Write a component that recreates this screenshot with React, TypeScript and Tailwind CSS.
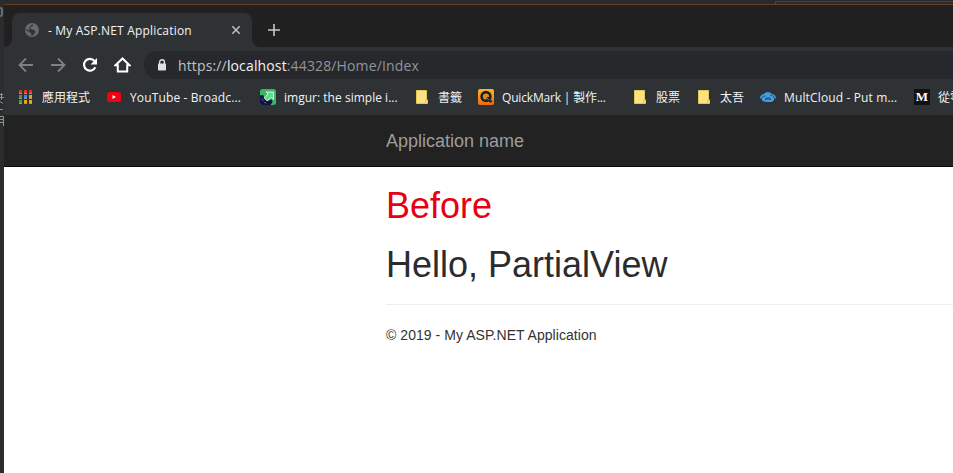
import React from 'react';

const uiFont = "font-['Open_Sans','Noto_Sans_CJK_TC',sans-serif]";

function Folder() {
  return (
    <svg width="16" height="16" viewBox="0 0 16 16">
      <path d="M2.500 1.500h10v9.500h1v3.500h-11z" fill="#fbe289" stroke="#e9c64d" />
      <path d="M11.500 14v-3h2" fill="none" stroke="#e9c64d" />
    </svg>
  );
}

function AppsIcon() {
  const rows = [
    ['#e3342c', '#e3342c', '#e3342c'],
    ['#459a50', '#4285f4', '#eda60c'],
    ['#459a50', '#eda60c', '#eda60c'],
  ];
  return (
    <svg width="16" height="16" viewBox="0 0 16 16" shapeRendering="crispEdges">
      {rows.map((row, r) =>
        row.map((color, c) => (
          <g key={`${r}-${c}`}>
            <rect x={1 + c * 5} y={1 + r * 5} width="3" height="3" fill={color} />
            <rect x={1 + c * 5} y={4 + r * 5} width="3" height="1" fill="#9a9c9b" />
          </g>
        )),
      )}
    </svg>
  );
}

function YouTubeIcon() {
  return (
    <svg width="16" height="16" viewBox="0 0 16 16">
      <rect x="1" y="3" width="14" height="10" rx="2.500" fill="#f00011" />
      <path d="M6.500 6v4l3.500-2z" fill="#fff" />
    </svg>
  );
}

function ImgurIcon() {
  return (
    <svg width="16" height="16" viewBox="0 0 16 16">
      <rect width="16" height="16" rx="2.500" fill="#3fb364" />
      <path d="M0 6.500l3-.5 2 3 1 2 3 .5 3-1 .5 2.500-2 3H2.500A2.500 2.500 0 0 1 0 13.500z" fill="#15123f" />
      <path d="M6 3h7.500v7.500L11 8.300 7.300 12 4 8.700 8 5.200z" fill="#5fd98b" stroke="#d9f5df" strokeLinejoin="round" />
      <path d="M1.500 9.500l2 2.500M4 13.500l2.500.5" stroke="#7371a0" strokeWidth=".8" />
    </svg>
  );
}

function QuickMarkIcon() {
  return (
    <svg width="16" height="16" viewBox="0 0 16 16">
      <defs>
        <linearGradient id="qm" x1="0" y1="0" x2="0" y2="1">
          <stop stopColor="#fbb72a" />
          <stop offset="1" stopColor="#f0690d" />
        </linearGradient>
      </defs>
      <rect width="16" height="16" rx="2" fill="url(#qm)" />
      <circle cx="8" cy="7.500" r="4.400" fill="#e58c1d" stroke="#1d211e" strokeWidth="2.600" />
      <path d="M9 8.500l4.500 4.500" stroke="#1d211e" strokeWidth="2.800" />
      <path d="M8.500 8.500l2 2M12 10.500l1 1" stroke="#a8a184" strokeWidth="1" />
    </svg>
  );
}

function CloudIcon() {
  return (
    <svg width="16" height="16" viewBox="0 0 16 16">
      <path d="M4 5C5 2.500 10.500 2.500 12 5c2.500.3 4 2.200 4 4.500h-2c.5 3-2 3.500-6 3.500s-6.500-.5-6-3.500H0C0 7 1.500 5.300 4 5z" fill="#449fe0" />
      <path d="M1.500 9.500C2.500 7.500 4 7 5.500 7M14.500 9.500C13.500 7 12 5.800 10 6" fill="none" stroke="#24496a" strokeWidth="1" />
      <path d="M5 10.200c.8-1.800 5.200-1.800 6 0z" fill="#2f7fbd" stroke="#1e4c73" strokeWidth=".9" />
    </svg>
  );
}

function MediumIcon() {
  return (
    <span className="flex h-4 w-4 items-center justify-center bg-[#111] font-['Liberation_Serif',serif] text-[13px] leading-4 font-bold text-white">
      M
    </span>
  );
}

const bookmarks = [
  { label: '應用程式', icon: <AppsIcon />, width: 'w-[88px]', text: '' },
  { label: 'YouTube - Broadc...', icon: <YouTubeIcon />, width: 'w-[154px]', text: 'tracking-[0.13px]' },
  { label: 'imgur: the simple i...', icon: <ImgurIcon />, width: 'w-[154px]', text: 'tracking-[0.02px]' },
  { label: '書籤', icon: <Folder />, width: 'w-16', text: '' },
  { label: 'QuickMark | 製作...', icon: <QuickMarkIcon />, width: 'w-[154px]', text: 'tracking-[-0.17px]' },
  { label: '股票', icon: <Folder />, width: 'w-16', text: '' },
  { label: '太吾', icon: <Folder />, width: 'w-16', text: '' },
  { label: 'MultCloud - Put m...', icon: <CloudIcon />, width: 'w-[154px]', text: 'tracking-[0.14px]' },
  { label: '從零', icon: <MediumIcon />, width: 'w-[88px]', text: '' },
];

function TabStrip() {
  return (
    <div className="flex h-[42px] items-end bg-[#202021] pl-2">
      <div className="relative flex h-[34px] w-[240px] items-center rounded-t-lg bg-[#2e3234]">
        <svg className="ml-3 shrink-0" width="16" height="16" viewBox="0 0 16 16">
          <circle cx="8" cy="8" r="7" fill="#66696b" />
          <path d="M8 2.500c2 0 1 1.500-.5 2S6 6 7 7s3 .5 4 2-1 3-2.500 4.500L7 14l.5-2.500C6 10.500 4 9 2 8.500L1.800 7 4 8l2 1-1-3z" fill="#2e3234" />
        </svg>
        <span className="mt-0.5 ml-2 w-[152px] text-[12px] tracking-[0.18px] whitespace-nowrap text-[#f1f3f4]">- My ASP.NET Application</span>
        <svg className="absolute top-3 left-[219px]" width="10" height="10" viewBox="0 0 10 10">
          <path d="M1.300 1.300l7.400 7.400M8.700 1.300L1.300 8.700" stroke="#bdc1c6" strokeWidth="1.500" />
        </svg>
        <svg className="absolute bottom-0 -left-2" width="8" height="8">
          <path d="M8 0v8H0a8 8 0 0 0 8-8" fill="#2e3234" />
        </svg>
        <svg className="absolute -right-2 bottom-0" width="8" height="8">
          <path d="M0 0v8h8a8 8 0 0 1-8-8" fill="#2e3234" />
        </svg>
      </div>
      <svg className="mb-[11px] ml-4" width="12" height="12" viewBox="0 0 12 12">
        <path d="M6 0v12M0 6h12" stroke="#c5c8cb" strokeWidth="1.600" />
      </svg>
    </div>
  );
}

function Toolbar() {
  return (
    <div className="flex h-9 items-center bg-[#2e3234]">
      <svg className="ml-[14px] shrink-0" width="16" height="16" viewBox="0 0 16 16" fill="none" stroke="#7e8183" strokeWidth="1.800">
        <path d="M15 8H2M8 1.500L1.500 8 8 14.500" />
      </svg>
      <svg className="ml-4 shrink-0" width="16" height="16" viewBox="0 0 16 16" fill="none" stroke="#7e8183" strokeWidth="1.800">
        <path d="M1 8h13M8 1.500L14.500 8 8 14.500" />
      </svg>
      <svg className="ml-4 shrink-0" width="16" height="16" viewBox="0 0 16 16">
        <path d="M13.300 10.200A5.900 5.900 0 1 1 12.500 4" fill="none" stroke="#fff" strokeWidth="2.100" />
        <path d="M15 1v6.500H8.500z" fill="#fff" />
      </svg>
      <svg className="ml-4 shrink-0" width="17" height="16" viewBox="0 0 17 16">
        <path d="M1.500 8.300L8.500 1.500l7 6.800H13.200v6.300H3.800V8.300z" fill="none" stroke="#fff" strokeWidth="2" />
      </svg>
      <div className="ml-[13px] flex h-7 grow items-center rounded-l-full bg-[#27282c] pl-[13px]">
        <svg width="10" height="12" viewBox="0 0 10 12">
          <path d="M2.600 5V3.200a2.400 2.400 0 0 1 4.800 0V5" fill="none" stroke="#dfe1e5" strokeWidth="1.400" />
          <rect x="1" y="4.500" width="8" height="7" rx=".8" fill="#dfe1e5" />
        </svg>
        <span className="ml-[11px] text-[14px] tracking-[0.14px] whitespace-nowrap text-[#8f959b]">
          <span className="text-[#bec3c8]">https://</span>
          <span className="text-[#f1f3f4]">localhost</span>:44328/Home/Index
        </span>
      </div>
    </div>
  );
}

function BookmarksBar() {
  return (
    <div className="flex h-8 items-center overflow-hidden bg-[#2e3234] pb-1 pl-[14px]">
      {bookmarks.map((b) => (
        <div key={b.label} className={`flex shrink-0 items-center gap-2 ${b.width}`}>
          <span className="block h-4 w-4 shrink-0">{b.icon}</span>
          <span className={`pt-0.5 text-[12px] leading-4 whitespace-nowrap text-[#f1f3f4] ${b.text}`}>{b.label}</span>
        </div>
      ))}
    </div>
  );
}

export default function App() {
  return (
    <div className="flex h-[473px] w-[953px] overflow-hidden bg-[#2a2a2c]">
      <div className="flex w-1 shrink-0 flex-col overflow-hidden bg-[#2c2b2e]">
        <div className="mt-[7px] h-[10px] w-[3px] rounded-r-full border-2 border-l-0 border-[#68696b]" />
        <svg className="mt-[75px] shrink-0" width="4" height="34" viewBox="0 0 4 34" fill="none" stroke="#83988e">
          <path d="M0 2.500h3M0 5.500h4M1.500 1v7M0 9.500l3 2M0 17.500h3M0 24.500h3.500v10M0 27.500h3M0 30.500h3" />
        </svg>
      </div>
      <div className="flex min-w-0 grow flex-col">
        <div className="flex h-[5px] shrink-0 flex-col items-end justify-between border-b border-[#653f26] bg-[#2a2a2c] pt-px">
          <div className="h-[3px] w-[178px] border-t border-l border-[#444347]" />
        </div>
        <div className={`shrink-0 ${uiFont}`}>
          <TabStrip />
          <Toolbar />
          <BookmarksBar />
        </div>
        <div className="flex min-h-0 grow flex-col bg-white font-['Liberation_Sans',Arial,sans-serif]">
          <nav className="h-[52px] shrink-0 border-b border-[#080808] bg-[#222] pt-4 pl-[382px] text-[18px] leading-5 text-[#9d9d9d]">
            Application name
          </nav>
          <main className="pt-[19px] pl-[382px] text-[#333]">
            <h1 className="text-[36px] leading-10 text-[#e60012]">Before</h1>
            <h1 className="mt-[19px] text-[36px] leading-10 text-[#2c2c2e]">Hello, PartialView</h1>
            <hr className="mt-[19px] border-[#eee]" />
            <footer className="mt-5 text-[14px] leading-5 tracking-[0.05px]">© 2019 - My ASP.NET Application</footer>
          </main>
        </div>
      </div>
    </div>
  );
}
